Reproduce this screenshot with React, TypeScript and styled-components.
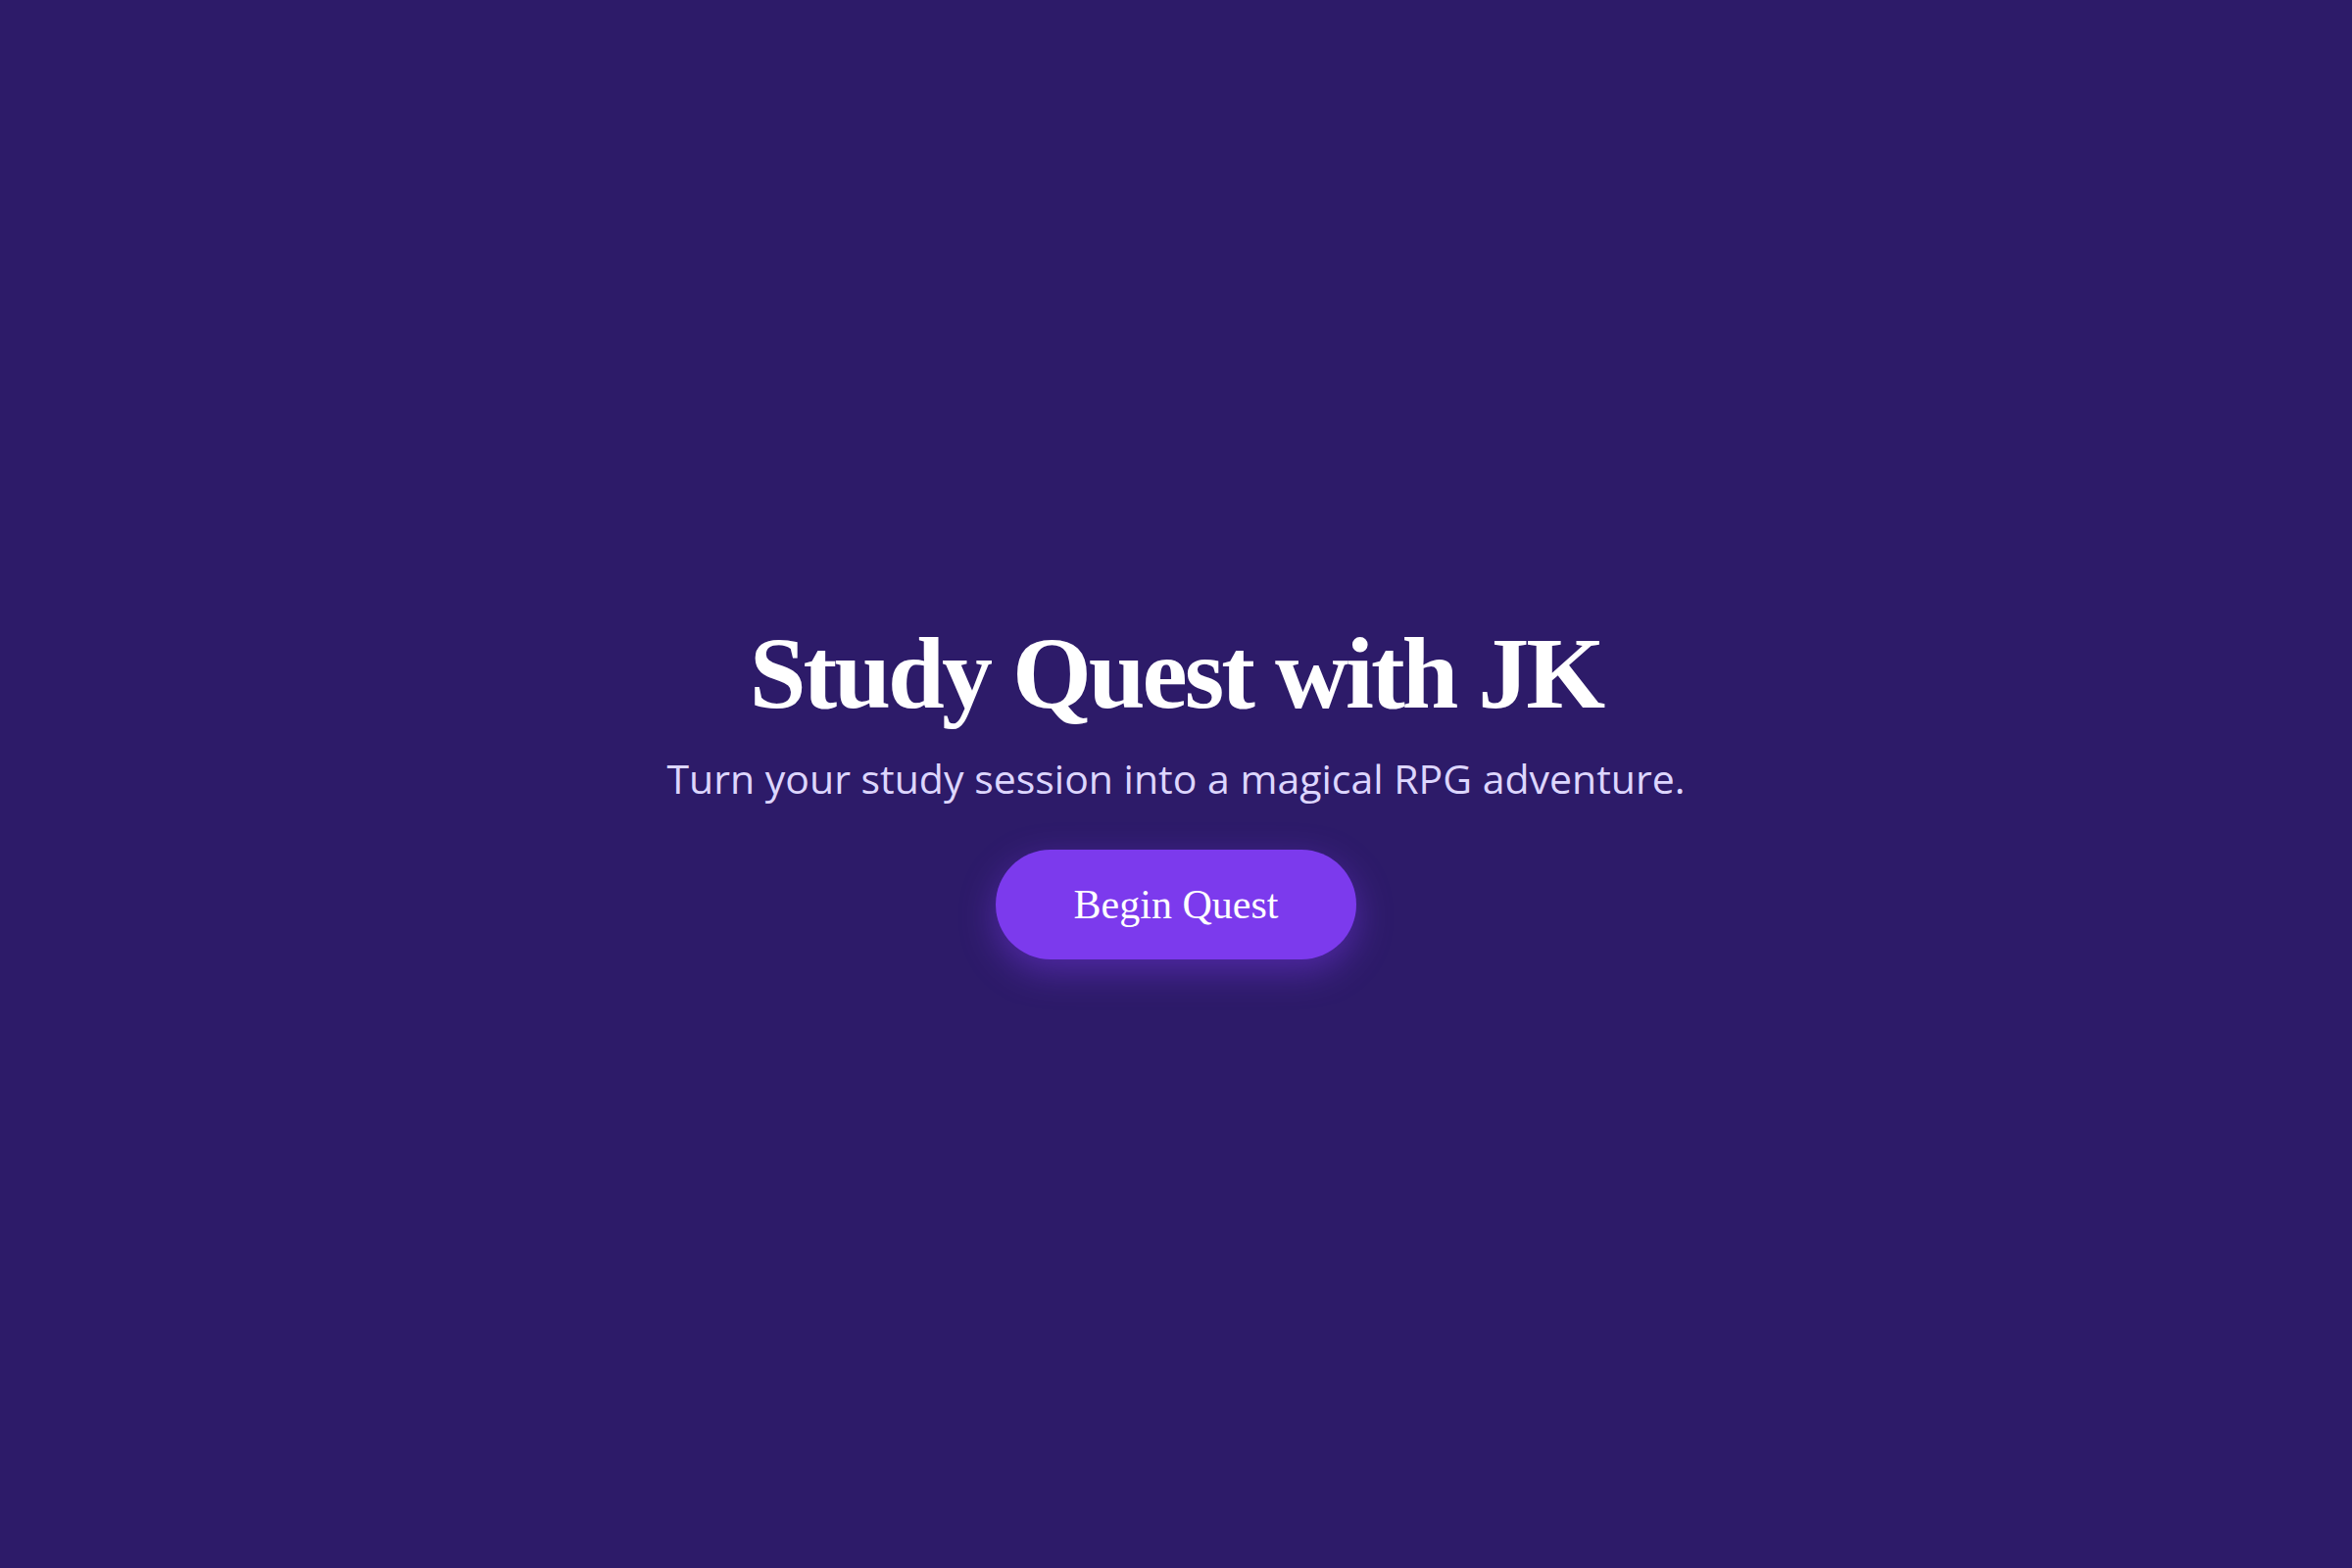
import React from "react";
import styled, { createGlobalStyle } from "styled-components";

const GlobalStyle = createGlobalStyle`
  html, body {
    margin: 0;
    padding: 0;
    background: #2d1b69;
  }
  * {
    box-sizing: border-box;
  }
`;

const Page = styled.main`
  min-height: 100vh;
  display: flex;
  flex-direction: column;
  align-items: center;
  justify-content: center;
  background: #2d1b69;
  text-align: center;
  padding-top: 4px;
`;

const Title = styled.h1`
  margin: 0;
  font-family: "Liberation Serif", "DejaVu Serif", serif;
  font-weight: 700;
  font-size: 104px;
  line-height: 1.2;
  letter-spacing: -3px;
  color: #ffffff;
`;

const Subtitle = styled.p`
  margin: 14px 0 0 0;
  font-family: "Open Sans", "Noto Sans", sans-serif;
  font-weight: 400;
  font-size: 41px;
  line-height: 1.5;
  color: #ddd6fe;
`;

const QuestButton = styled.button`
  margin-top: 41px;
  width: 368px;
  height: 112px;
  border: none;
  border-radius: 56px;
  background: #7c3aed;
  color: #ffffff;
  font-family: "Liberation Serif", "DejaVu Serif", serif;
  font-size: 42px;
  cursor: pointer;
  box-shadow: 0 12px 36px rgba(124, 58, 237, 0.45);
`;

export default function App() {
  return (
    <>
      <GlobalStyle />
      <Page>
        <Title>Study Quest with JK</Title>
        <Subtitle>Turn your study session into a magical RPG adventure.</Subtitle>
        <QuestButton>Begin Quest</QuestButton>
      </Page>
    </>
  );
}
